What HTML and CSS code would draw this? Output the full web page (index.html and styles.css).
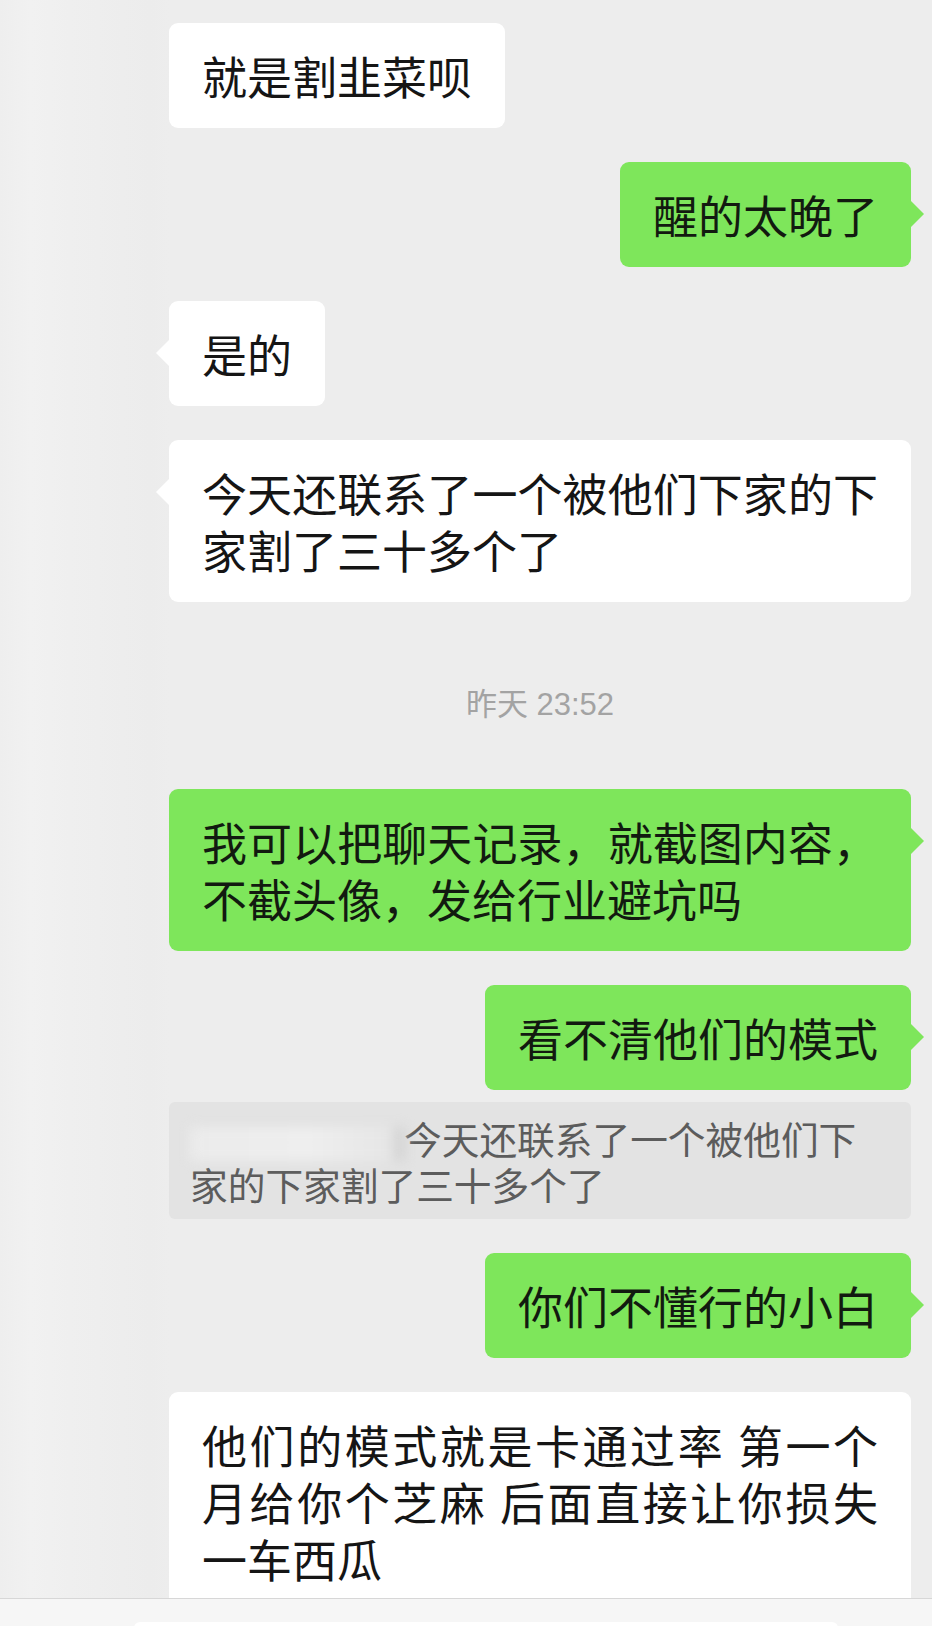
FILE: index.html
```html
<!DOCTYPE html>
<html>
	<head>
		<meta charset="utf-8">
		<title>聊天记录</title>
		<link rel="stylesheet" href="styles.css">
	</head>
	<body>
		<div class="screen">
			<div class="chat">
				<div class="row left"><div class="bubble">就是割韭菜呗</div></div>
				<div class="row right"><div class="bubble green tail">醒的太晚了</div></div>
				<div class="row left"><div class="bubble tail">是的</div></div>
				<div class="row left"><div class="bubble tail">今天还联系了一个被他们下家的下家割了三十多个了</div></div>
				<div class="time">昨天 23:52</div>
				<div class="row right"><div class="bubble green tail">我可以把聊天记录，就截图内容，不截头像，发给行业避坑吗</div></div>
				<!-- 带引用的消息 -->
				<div class="row right quoted">
					<div class="bubble green tail">看不清他们的模式</div>
					<div class="quote"><span class="quote-name"></span>今天还联系了一个被他们下家的下家割了三十多个了</div>
				</div>
				<div class="row right"><div class="bubble green tail">你们不懂行的小白</div></div>
				<div class="row left"><div class="bubble">他们的模式就是卡通过率 第一个月给你个芝麻 后面直接让你损失一车西瓜</div></div>
			</div>
			<!-- 底部输入栏 -->
			<div class="input-bar"><div class="input-box"></div></div>
		</div>
	</body>
</html>
```

FILE: styles.css
```css
*{
	margin: 0;
	padding: 0;
	box-sizing: border-box;
}
body{
	width: 932px;
	height: 1626px;
	overflow: hidden;
	background: #ededed;
	font-family: "Noto Sans CJK SC", sans-serif;
}
.screen{
	height: 1626px;
	display: flex;
	flex-direction: column;
}
.chat{
	flex: 1;
	overflow: hidden;
	display: flex;
	flex-direction: column;
	gap: 34px;
	padding: 23px 21px 0 169px;
	/* 左侧模糊的头像栏 */
	background: linear-gradient(to right, #eeeeee 0, #f1f1f1 30px, #efefef 70px, #ececec 150px, #ededed 170px);
}
.row{
	display: flex;
}
.row.right{
	justify-content: flex-end;
}
.bubble{
	position: relative;
	padding: 24px 33px;
	font-size: 45px;
	line-height: 57px;
	text-align: justify;
	color: #151515;
	background: #fff;
	border-radius: 9px;
}
.bubble.green{
	background: #7ee65b;
	color: #121a10;
}
.tail::before{
	content: "";
	position: absolute;
	top: 39px;
	width: 0;
	height: 0;
	border-top: 13px solid transparent;
	border-bottom: 13px solid transparent;
}
.left .tail::before{
	left: -13px;
	border-right: 13px solid #fff;
}
.right .tail::before{
	left: 100%;
	border-left: 13px solid #7ee65b;
}
.time{
	align-self: center;
	margin: 49px 0 30px;
	font-family: "Liberation Sans", "Noto Sans CJK SC", sans-serif;
	font-size: 31px;
	line-height: 40px;
	color: #a3a3a3;
}
.row.quoted{
	flex-direction: column;
	align-items: flex-end;
	gap: 12px;
}
.quote{
	align-self: stretch;
	padding: 13px 21px 12px;
	font-size: 37.7px;
	line-height: 46px;
	color: #5c5c5c;
	background: #e3e3e3;
	border-radius: 6px;
}
.quote-name{
	display: inline-block;
	width: 214px;
	height: 34px;
	vertical-align: middle;
	background: linear-gradient(to right, #ebebeb, #eeeeee 55%, #e6e6e6 93%, #c9c9c9);
	filter: blur(6px);
}
.input-bar{
	height: 28px;
	padding: 23px 94px 0 134px;
	background: #f6f6f6;
	border-top: 1px solid #d7d7d7;
}
.input-box{
	height: 20px;
	background: #fff;
	border-radius: 6px;
}
```
